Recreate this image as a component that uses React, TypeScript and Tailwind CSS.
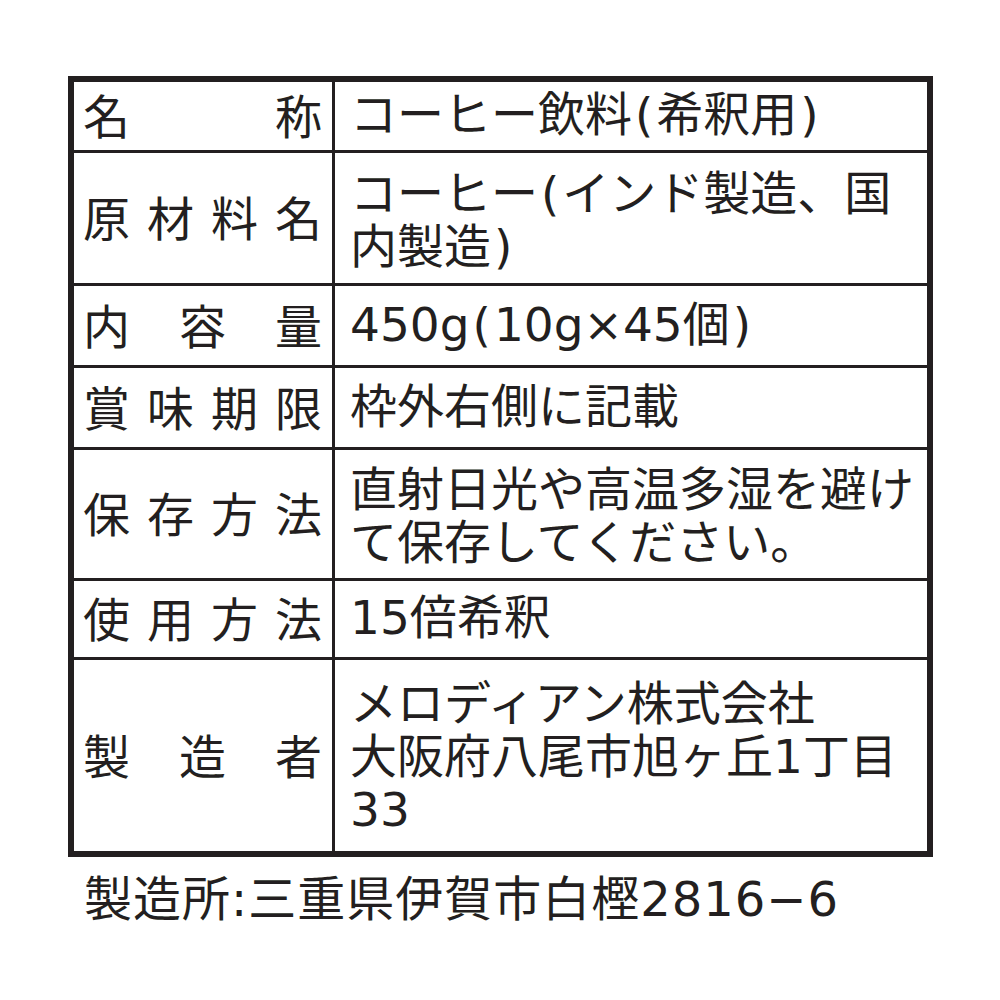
import React from 'react';

type Row = {
  label: string[];
  value: string[];
  h: string;
  pt: string;
};

// heights include the 3px bottom rule (border-box)
const rows: Row[] = [
  { label: ['名', '称'], value: ['コーヒー飲料(希釈用)'], h: 'h-[71px]', pt: 'pt-0' },
  { label: ['原', '材', '料', '名'], value: ['コーヒー(インド製造、国', '内製造)'], h: 'h-[133px]', pt: 'pt-[7px]' },
  { label: ['内', '容', '量'], value: ['450g(10g×45個)'], h: 'h-[82px]', pt: 'pt-0' },
  { label: ['賞', '味', '期', '限'], value: ['枠外右側に記載'], h: 'h-[82px]', pt: 'pt-0' },
  { label: ['保', '存', '方', '法'], value: ['直射日光や高温多湿を避け', 'て保存してください。'], h: 'h-[131px]', pt: 'pt-[7px]' },
  { label: ['使', '用', '方', '法'], value: ['15倍希釈'], h: 'h-[79px]', pt: 'pt-0' },
  { label: ['製', '造', '者'], value: ['メロディアン株式会社', '大阪府八尾市旭ヶ丘1丁目', '33'], h: 'h-[191px]', pt: 'pt-[4px]' },
];

const cjk = { fontFamily: '"Noto Sans CJK JP", "Noto Sans", sans-serif' };
const mixed = { fontFamily: '"DejaVu Sans", "Noto Sans CJK JP", sans-serif' };

// parens sit a little apart from the characters around them
const withParens = (line: string) =>
  line.split(/([()])/).map((part, k) =>
    part === '(' || part === ')' ? (
      <span key={k} className="mx-[3px]">
        {part}
      </span>
    ) : (
      part
    )
  );

const App: React.FC = () => {
  return (
    <div className="w-[1000px] h-[1000px] bg-white text-[#231f20] overflow-hidden" style={cjk}>
      <div className="ml-[68px] mt-[76px] w-[865px] border-[6px] border-[#231f20] flex flex-col">
        {rows.map((row, i) => (
          <div
            key={i}
            className={`flex ${row.h} ${i < rows.length - 1 ? 'border-b-[3px] border-[#231f20]' : ''}`}
          >
            <div className="w-[261px] shrink-0 border-r-[3px] border-[#231f20] flex items-center justify-between pl-[9px] pr-[10px] pb-[4px] text-[47px] leading-[52px]">
              {row.label.map((c, j) => (
                <span key={j}>{c}</span>
              ))}
            </div>
            <div
              className={`flex-1 flex flex-col justify-center pl-[15px] ${row.pt} pb-[3px] text-[47px] leading-[53px] whitespace-nowrap`}
              style={mixed}
            >
              {row.value.map((line, j) => (
                <div key={j}>{withParens(line)}</div>
              ))}
            </div>
          </div>
        ))}
      </div>
      <div className="ml-[84px] mt-[16px] text-[48px] leading-[52px] tracking-[1px] whitespace-nowrap" style={mixed}>
        製造所:三重県伊賀市白樫2816−6
      </div>
    </div>
  );
};

export default App;
